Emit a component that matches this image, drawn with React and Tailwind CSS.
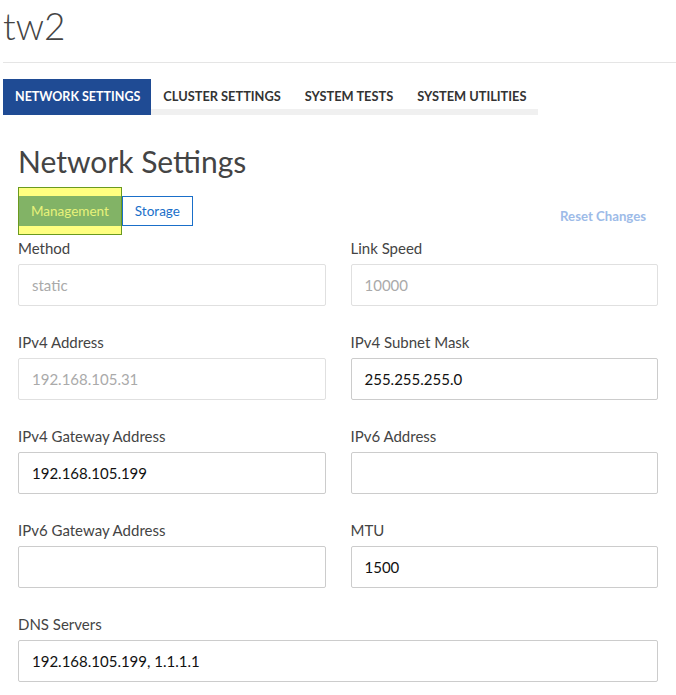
import React from 'react';

const tabs = ['NETWORK SETTINGS', 'CLUSTER SETTINGS', 'SYSTEM TESTS', 'SYSTEM UTILITIES'];

const fields = [
  { label: 'Method', value: 'static', disabled: true },
  { label: 'Link Speed', value: '10000', disabled: true },
  { label: 'IPv4 Address', value: '192.168.105.31', disabled: true },
  { label: 'IPv4 Subnet Mask', value: '255.255.255.0' },
  { label: 'IPv4 Gateway Address', value: '192.168.105.199' },
  { label: 'IPv6 Address', value: '' },
  { label: 'IPv6 Gateway Address', value: '' },
  { label: 'MTU', value: '1500' },
];

const Field = ({ label, value, disabled, wide }) => (
  <div className={wide ? 'col-span-2' : ''}>
    <div className="text-[15px] leading-[20px] text-[#444]">{label}</div>
    <div
      className={`mt-[6px] h-[42px] flex items-center px-[13px] rounded-[2px] border text-[15px] ${
        disabled ? 'border-[#e0e0e0] text-[#aaa]' : 'border-[#ccc] text-[#111]'
      }`}
    >
      {value}
    </div>
  </div>
);

const App = () => {
  return (
    <div className="min-h-screen bg-white pl-[3px]" style={{ fontFamily: 'Lato, "Liberation Sans", sans-serif' }}>
      {/* Header */}
      <h1 className="text-[37px] font-light leading-[50px] pt-[1px] text-[#444]">tw2</h1>
      <div className="mt-[11px] border-t border-[#e5e5e5]"></div>

      {/* Tabs */}
      <div className="mt-[16px] flex">
        {tabs.map((t, i) =>
          i === 0 ? (
            <div key={t} className="h-[36px] pl-[12px] pr-[11px] flex items-center bg-[#1f4b94] text-white text-[12.5px] font-bold">
              {t}
            </div>
          ) : (
            <div key={t} className="h-[36px] px-[12px] flex items-center border-b-[6px] border-[#f0f0f0] pt-[6px] text-[#333] text-[12.8px] font-bold">
              {t}
            </div>
          )
        )}
      </div>

      <div className="pl-[15px] pr-[18px]">
        <h2 className="mt-[28px] text-[30px] leading-[36px] text-[#444]">Network Settings</h2>

        {/* Sub tabs */}
        <div className="mt-[8px] flex items-start">
          <div className="border border-[#6a9a1f] bg-[#ffff80] py-[8px]">
            <div className="h-[30px] px-[12px] flex items-center bg-[#82b366] text-[#e8f27a] text-[13.5px]">Management</div>
          </div>
          <div className="mt-[9px] h-[30px] px-[12px] flex items-center border border-[#1a6fc9] text-[#1a6fc9] text-[13.5px]">
            Storage
          </div>
          <div className="ml-auto mt-[20px] mr-[12px] text-[13.2px] font-bold text-[#9dbbe8]">Reset Changes</div>
        </div>

        {/* Form */}
        <div className="mt-[3px] grid grid-cols-2 gap-x-[25px] gap-y-[26px]">
          {fields.map((f) => (
            <Field key={f.label} {...f} />
          ))}
          <Field label="DNS Servers" value="192.168.105.199, 1.1.1.1" wide />
        </div>
      </div>
    </div>
  );
};

export default App;
